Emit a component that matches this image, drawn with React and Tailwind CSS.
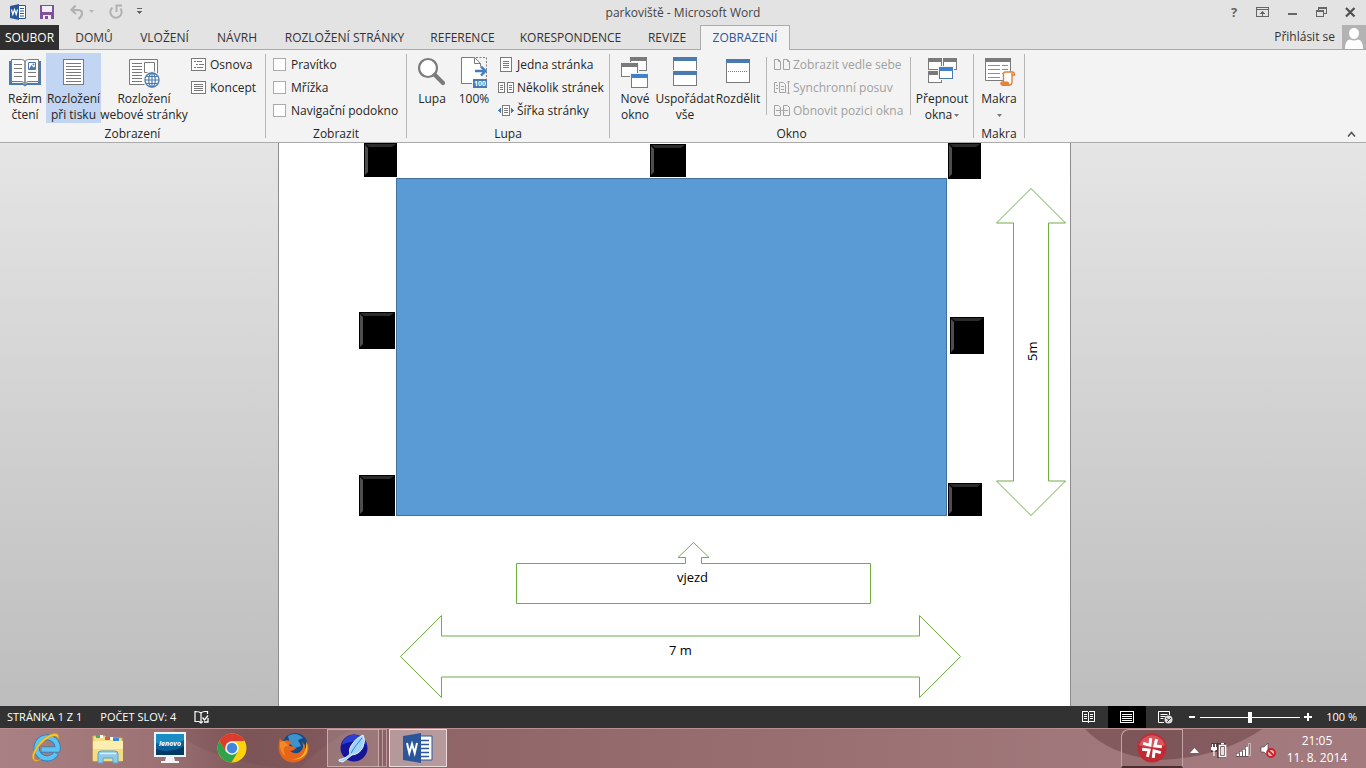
import React from "react";

const BLUE = "#4a7ab0";
const GREY = "#7a7a7a";

function Icon({ w = 32, h = 32, label, children, crisp = true }) {
  return (
    <svg
      width={w}
      height={h}
      viewBox={`0 0 ${w} ${h}`}
      fill="none"
      shapeRendering={crisp ? "crispEdges" : "auto"}
      className="shrink-0"
      aria-hidden={label ? undefined : true}
      aria-label={label}
    >
      {children}
    </svg>
  );
}

function Lines({ x1, x2, ys, color = GREY }) {
  return ys.map((y) => <path key={y} d={`M${x1} ${y}.5H${x2}`} stroke={color} />);
}

/* ---------- large ribbon icons ---------- */

const BookIcon = () => (
  <Icon crisp={false}>
    <path d="M0 4h3v22h11l2 1.500 2-1.500h11V4h3v24H18l-2 1.500L14 28H0z" fill={BLUE} />
    <path d="M2.500 2.500h10q3.500 0 3.500 3v21q-1-2-4-2H2.500zM29.500 2.500h-10Q16 2.500 16 5.500v21q1-2 4-2h9.500z" fill="#fff" stroke={GREY} />
    <path d="M5 7.500h8M5 11.500h8M5 15.500h8M5 19.500h8M19 15.500h8M19 19.500h8" stroke={GREY} />
    <path d="M19.500 5.500h7v7h-7z" fill="#fff" stroke={BLUE} />
    <path d="M20 12l2.500-4 2 2.500 1-1L27 12z" fill={BLUE} />
    <circle cx="24.500" cy="7.500" r="1" fill={BLUE} />
  </Icon>
);

const PrintLayoutIcon = () => (
  <Icon>
    <path d="M5.500 2.500h20v25h-20z" fill="#fff" stroke={GREY} />
    <Lines x1={8} x2={23} ys={[6, 9, 12, 15, 18, 21, 24]} />
  </Icon>
);

const WebLayoutIcon = () => (
  <Icon crisp={false}>
    <path d="M1.500 2.500h28v25h-28z" fill="#fff" stroke={GREY} />
    <path d="M4 6.500h10M4 9.500h10M4 12.500h10M4 15.500h10M4 18.500h10M4 21.500h10M4 24.500h10" stroke={GREY} />
    <path d="M16.500 5.500h10v10h-10z" fill="#fff" stroke={GREY} />
    <circle cx="24" cy="23" r="9" fill="#f3f3f3" />
    <circle cx="24" cy="23" r="7" fill="#fff" stroke={BLUE} strokeWidth="1.300" />
    <ellipse cx="24" cy="23" rx="3.300" ry="7" stroke={BLUE} strokeWidth="1.200" />
    <path d="M24 16v14M17 23h14M18.500 19.500h11M18.500 26.500h11" stroke={BLUE} strokeWidth="1.200" />
  </Icon>
);

const MagnifierIcon = () => (
  <Icon crisp={false}>
    <circle cx="12" cy="11" r="9" fill="#fff" stroke={GREY} strokeWidth="2.200" />
    <path d="M19 18l8 8" stroke={GREY} strokeWidth="4.200" strokeLinecap="round" />
  </Icon>
);

const Zoom100Icon = () => (
  <Icon crisp={false}>
    <path d="M3.500.5h13l6 6v20h-19z" fill="#fff" />
    <path d="M14 26.500H3.500V.5h13v6h6M16.500.5l6 6v3" stroke={GREY} />
    <path d="M18 .5h10.500V22" stroke={GREY} strokeDasharray="2 1.500" />
    <path d="M17 14h10M23 9.500l4.500 4.500-4.500 4.500" stroke="#3f7cc0" strokeWidth="2.400" />
    <path d="M15 22h14v9H15z" fill={BLUE} />
    <text x="22" y="29" textAnchor="middle" fontSize="7" fontWeight="700" fill="#fff" fontFamily="Open Sans, sans-serif">100</text>
  </Icon>
);

function Win({ x, y, w, h, bar = GREY, bh = 4, stroke = GREY }) {
  return (
    <>
      <rect x={x - 1} y={y - 1} width={w + 2} height={h + 2} fill="#f3f3f3" />
      <rect x={x + 0.5} y={y + 0.5} width={w - 1} height={h - 1} fill="#fff" stroke={stroke} />
      <rect x={x} y={y} width={w} height={bh} fill={bar} />
    </>
  );
}

const NewWindowIcon = () => (
  <Icon>
    <Win x={11} y={0} w={17} h={14} />
    <Win x={2} y={6} w={17} h={14} />
    <Win x={12} y={17} w={17} h={14} bar="#4380cc" />
  </Icon>
);
const ArrangeIcon = () => (
  <Icon>
    <Win x={4} y={0} w={24} h={15} />
    <Win x={4} y={14} w={24} h={15} />
    <path d="M4 0h24v4H4zM4 14h24v4H4z" fill={BLUE} />
  </Icon>
);
const SplitIcon = () => (
  <Icon>
    <Win x={4} y={2} w={24} h={24} bar={BLUE} />
    <path d="M6 14.500h20" stroke={GREY} strokeDasharray="1 1" />
  </Icon>
);
const SwitchIcon = () => (
  <Icon>
    <Win x={2} y={1} w={14} h={12} />
    <Win x={17} y={1} w={14} h={12} />
    <Win x={2} y={14} w={14} h={12} />
    <Win x={13} y={10} w={14} h={12} bar="#4380cc" stroke={BLUE} />
  </Icon>
);
const MacroIcon = () => (
  <Icon crisp={false}>
    <path d="M2.500 1.500h25v22h-25z" fill="#fff" stroke={GREY} />
    <path d="M2 1h26v4H2z" fill={GREY} />
    <path d="M5 8.500h12m2 0h6M5 12.500h12m2 0h6M5 16.500h12m2 0h4M5 20.500h12" stroke="#8f8f8f" />
    <path d="M20 15h10v13H17v-4h3z" fill="#fff" />
    <path d="M20.500 25V17q0-2 2-2h7q2 0 2 3h-3M29 16v9q0 3-2.500 3" stroke="#e07f36" strokeWidth="1.400" />
    <path d="M18 25h7l1.500 3.500H19q-2-1-1-3.500z" fill="#e8833a" stroke="#e07f36" />
  </Icon>
);

/* ---------- small ribbon icons ---------- */

const OutlineIcon = () => (
  <Icon w={16} h={16}>
    <path d="M.5 1.500h14v12H.5z" fill="#fff" stroke={GREY} />
    <path d="M3 4.500h2m1 0h5M5 7.500h2m1 0h5M3 10.500h2m1 0h6" stroke={GREY} />
  </Icon>
);
const DraftIcon = () => (
  <Icon w={16} h={16}>
    <path d="M.5 1.500h14v12H.5z" fill="#fff" stroke={GREY} />
    <Lines x1={3} x2={12} ys={[4, 6, 8, 10]} />
  </Icon>
);
const OnePageIcon = () => (
  <Icon w={16} h={16}>
    <path d="M2.500.5h11v14h-11z" fill="#fff" stroke={GREY} />
    <Lines x1={5} x2={11} ys={[4, 6, 8, 10]} />
  </Icon>
);
const MultiPageIcon = () => (
  <Icon w={16} h={16}>
    <path d="M.5 2.500h6v10h-6zM9.500 2.500h6v10h-6z" fill="#fff" stroke={GREY} />
    <Lines x1={2} x2={5} ys={[5, 7, 9]} />
    <Lines x1={11} x2={14} ys={[5, 7, 9]} />
  </Icon>
);
const PageWidthIcon = () => (
  <Icon w={16} h={16}>
    <path d="M4.500 2.500h7v10h-7z" fill="#fff" stroke={GREY} />
    <Lines x1={6} x2={10} ys={[5, 7, 9]} />
    <path d="M3 5v5L0 7.500zM13 5v5l3-2.500z" fill={BLUE} />
  </Icon>
);
const SideBySideIcon = () => (
  <Icon w={16} h={16} crisp={false}>
    <path d="M.5 2.500h4l2 2v8h-6zM9.500 2.500h4l2 2v8h-6zM4.500 2.500v2h2M13.500 2.500v2h2" stroke="#a3a3a3" />
  </Icon>
);
const SyncIcon = () => (
  <Icon w={16} h={16} crisp={false}>
    <path d="M3 2.500H.5v10H3M5.500 2.500h4l2 2v8h-6zM2 5.500h2M2 8.500h2M7 6.500h3M7 9.500h3M14.500 1v13M13 2.500l1.500-1.500L16 2.500M13 12.500l1.500 1.500 1.500-1.500" stroke="#a3a3a3" />
  </Icon>
);
const ResetIcon = () => (
  <Icon w={16} h={16} crisp={false}>
    <path d="M.5 2.500h4l2 2v8h-6zM9.500 2.500h4l2 2v8h-6zM2 7.500h5M9 7.500h5M5.500 5.500l2 2-2 2M10.500 5.500l-2 2 2 2" stroke="#a3a3a3" />
  </Icon>
);

/* ---------- ribbon building blocks ---------- */

function BigButton({ icon, lines, width, active, caret }) {
  return (
    <button
      type="button"
      className={`flex h-[70px] shrink-0 flex-col items-center pt-1 text-center leading-4 whitespace-nowrap ${width} ${active ? "bg-[#c2d5f2]" : ""}`}
    >
      {icon}
      <span className="mt-0.5 flex flex-col items-center">
        {lines.map((l, i) => (
          <span key={i} className="flex h-4 items-center gap-0.5">
            {l}
            {caret && i === lines.length - 1 && <Caret />}
          </span>
        ))}
      </span>
    </button>
  );
}

const Caret = () => (
  <svg width="5" height="3" viewBox="0 0 5 3" aria-hidden="true">
    <path d="M0 0h5L2.500 3z" fill="#777" />
  </svg>
);

function SmallButton({ icon, children, disabled, gap = "gap-[3px]" }) {
  return (
    <button
      type="button"
      disabled={disabled}
      className={`flex h-[23px] items-center whitespace-nowrap ${gap} ${disabled ? "text-[#a0a0a0]" : ""}`}
    >
      {icon}
      {children}
    </button>
  );
}

function Group({ title, width, children }) {
  return (
    <>
      <section className={`flex shrink-0 flex-col pt-[3px] ${width}`} aria-label={title}>
        <div className="flex h-[70px]">{children}</div>
        <div className="mt-[3px] text-center leading-4">{title}</div>
      </section>
      <div className="my-1 w-px shrink-0 bg-[#b5b5b5]" />
    </>
  );
}

const Divider = () => <div className="mt-1 h-[58px] w-px shrink-0 bg-[#b5b5b5]" />;

function Check({ children }) {
  return (
    <label className="flex h-[23px] items-center gap-[5px] whitespace-nowrap">
      <input type="checkbox" className="size-[13px] appearance-none border border-[#ababab] bg-white" />
      {children}
    </label>
  );
}

const TABS = [
  ["DOMŮ", "w-[64px]"],
  ["VLOŽENÍ", "w-[77px]"],
  ["NÁVRH", "w-[68px]"],
  ["ROZLOŽENÍ STRÁNKY", "w-[147px]"],
  ["REFERENCE", "w-[89px]"],
  ["KORESPONDENCE", "w-[127px]"],
  ["REVIZE", "w-[66px]"],
];

function TitleBar() {
  return (
    <header className="grid h-[25px] grid-cols-[1fr_auto_1fr] items-center text-[#444]">
      <div className="flex items-center pb-0.5 pl-[9px]">
        <Icon w={18} h={18} crisp={false}>
          <path d="M9.500 2.500h7v13h-7z" fill="#fff" stroke="#2b579a" />
          <path d="M11 5.500h4M11 8h4M11 10.500h4M11 13h4" stroke="#2b579a" />
          <path d="M1 3l9-2v16l-9-2z" fill="#2b579a" />
          <path d="M2.500 6.500l1.300 5 1.700-5 1.700 5 1.300-5" stroke="#fff" strokeWidth="1.200" />
        </Icon>
        <button type="button" aria-label="Uložit" className="ml-3">
          <Icon w={16} h={16}>
            <path d="M1 1h14v14H1z" fill="#80509e" />
            <path d="M3 2h10v6H3zM4 11h8v4H4z" fill="#f3edf7" />
            <path d="M6 12h3v3H6z" fill="#80509e" />
          </Icon>
        </button>
        <button type="button" aria-label="Zpět" className="ml-3.5 flex items-center gap-1">
          <Icon w={16} h={16} crisp={false}>
            <path d="M6.500 1.500L2.500 6l4.500 4M2.500 6h6.500q4.500 0 4 4-.5 3-3.500 5" stroke="#b1b1b1" strokeWidth="2.200" />
          </Icon>
          <svg width="5" height="3" viewBox="0 0 5 3" aria-hidden="true"><path d="M0 0h5L2.500 3z" fill="#b8b8b8" /></svg>
        </button>
        <button type="button" aria-label="Opakovat" className="ml-3.5">
          <Icon w={16} h={16} crisp={false}>
            <path d="M4.500 3.500A5.700 5.700 0 1 0 12.500 4.500" stroke="#b1b1b1" strokeWidth="2" />
            <path d="M14 1.500H8.500V8" stroke="#b1b1b1" strokeWidth="2" />
          </Icon>
        </button>
        <button type="button" aria-label="Přizpůsobit panel" className="ml-3">
          <Icon w={7} h={7}>
            <path d="M1 .5h5" stroke="#666" />
            <path d="M1 3h5L3.500 6z" fill="#666" />
          </Icon>
        </button>
      </div>
      <h1>parkoviště - Microsoft Word</h1>
      <div className="flex items-center justify-end gap-[13px] pr-2 pb-0.5">
        <button type="button" aria-label="Nápověda" className="w-4 text-[13px] leading-4 font-bold text-[#666]">?</button>
        <button type="button" aria-label="Možnosti pásu karet">
          <Icon w={16} h={16}>
            <path d="M1.500 3.500h12v9h-12zM2 5.500h11" stroke="#666" />
            <path d="M7 7h1v5H7zM6 8h3v1H6zM5 9h5v1H5z" fill="#666" />
          </Icon>
        </button>
        <button type="button" aria-label="Minimalizovat">
          <Icon w={16} h={16}><path d="M4 9h9v2H4z" fill="#666" /></Icon>
        </button>
        <button type="button" aria-label="Obnovit">
          <Icon w={16} h={16}>
            <path d="M5.500 6V3.500h8v6H11M5 4.500h9" stroke="#666" />
            <path d="M3.500 6.500h7v6h-7zM3 7.500h8" stroke="#666" />
          </Icon>
        </button>
        <button type="button" aria-label="Zavřít">
          <Icon w={16} h={16} crisp={false}>
            <path d="M4 4l8.500 8.500M12.500 4L4 12.500" stroke="#505050" strokeWidth="2.200" />
          </Icon>
        </button>
      </div>
    </header>
  );
}

function TabRow() {
  return (
    <nav className="flex h-[25px] items-stretch text-[#333]">
      <button type="button" className="w-[59px] bg-[#2f2f2f] text-white">SOUBOR</button>
      <div className="flex flex-1 border-b border-[#a9a9a9] pl-[3px]">
        {TABS.map(([name, w]) => (
          <button key={name} type="button" className={`shrink-0 pt-0.5 whitespace-nowrap ${w}`}>{name}</button>
        ))}
        <button type="button" className="-mb-px w-[90px] shrink-0 border border-b-0 border-[#ababab] bg-[#f3f3f3] text-[#2b579a]">
          ZOBRAZENÍ
        </button>
        <button type="button" className="ml-auto flex items-center gap-[7px]">
          Přihlásit se
          <svg width="24" height="24" viewBox="0 0 24 24" aria-hidden="true">
            <path d="M0 0h24v24H0z" fill="#b3b3b3" />
            <path d="M7 8a5 5 0 0 1 10 0q0 3-2 5-3 2-6 0-2-2-2-5zM3 24q0-9 5-9.500 4 2 8 0 5 .5 5 9.500z" fill="#fff" />
          </svg>
        </button>
      </div>
    </nav>
  );
}

function Ribbon() {
  return (
    <div className="flex h-[93px] border-b border-[#ababab] bg-[#f3f3f3] text-[#262626]">
      <Group title="Zobrazení" width="w-[265px]">
        <div className="flex pl-1">
          <BigButton icon={<BookIcon />} lines={["Režim", "čtení"]} width="w-[42px]" />
          <BigButton icon={<PrintLayoutIcon />} lines={["Rozložení", "při tisku"]} width="w-[55px]" active />
          <BigButton icon={<WebLayoutIcon />} lines={["Rozložení", "webové stránky"]} width="w-[86px]" />
        </div>
        <div className="ml-1">
          <SmallButton icon={<OutlineIcon />}>Osnova</SmallButton>
          <SmallButton icon={<DraftIcon />}>Koncept</SmallButton>
        </div>
      </Group>
      <Group title="Zobrazit" width="w-[140px]">
        <div className="pl-[7px]">
          <Check>Pravítko</Check>
          <Check>Mřížka</Check>
          <Check>Navigační podokno</Check>
        </div>
      </Group>
      <Group title="Lupa" width="w-[202px]">
        <div className="flex pl-1">
          <BigButton icon={<MagnifierIcon />} lines={["Lupa"]} width="w-[42px]" />
          <BigButton icon={<Zoom100Icon />} lines={["100%"]} width="w-[42px]" />
        </div>
        <div className="ml-[3px]">
          <SmallButton icon={<OnePageIcon />}>Jedna stránka</SmallButton>
          <SmallButton icon={<MultiPageIcon />}>Několik stránek</SmallButton>
          <SmallButton icon={<PageWidthIcon />}>Šířka stránky</SmallButton>
        </div>
      </Group>
      <Group title="Okno" width="w-[363px]">
        <div className="flex pl-[5px]">
          <BigButton icon={<NewWindowIcon />} lines={["Nové", "okno"]} width="w-[40px]" />
          <BigButton icon={<ArrangeIcon />} lines={["Uspořádat", "vše"]} width="w-[60px]" />
          <BigButton icon={<SplitIcon />} lines={["Rozdělit"]} width="w-[46px]" />
        </div>
        <div className="ml-[5px] flex">
          <Divider />
          <div className="ml-[7px] w-[136px]">
            <SmallButton icon={<SideBySideIcon />} disabled>Zobrazit vedle sebe</SmallButton>
            <SmallButton icon={<SyncIcon />} disabled>Synchronní posuv</SmallButton>
            <SmallButton icon={<ResetIcon />} disabled>Obnovit pozici okna</SmallButton>
          </div>
          <Divider />
          <BigButton icon={<SwitchIcon />} lines={["Přepnout", "okna"]} width="w-[62px]" caret />
        </div>
      </Group>
      <Group title="Makra" width="w-[50px]">
        <BigButton icon={<MacroIcon />} lines={["Makra", ""]} width="w-[50px]" caret />
      </Group>
      <button type="button" aria-label="Sbalit pás karet" className="mr-2.5 mb-1 ml-auto self-end">
        <Icon w={9} h={7} crisp={false}>
          <path d="M1 5.500l3.500-4 3.500 4" stroke="#555" strokeWidth="1.600" />
        </Icon>
      </button>
    </div>
  );
}

/* Posts around the parking area: x, y, width, height in canvas units. */
const POSTS = [
  [364, 143, 33, 34],
  [650, 144, 36, 33],
  [948, 143, 33, 36],
  [359, 312, 36, 37],
  [950, 317, 34, 37],
  [359, 475, 36, 41],
  [948, 483, 34, 33],
];

function Drawing() {
  return (
    <div className="relative h-[563px] w-[791px]">
      <svg width="791" height="563" viewBox="279 143 791 563" fill="none" aria-hidden="true">
        <rect x="396.500" y="178.500" width="550" height="337" fill="#5b9bd5" stroke="#41719c" />
        {POSTS.map(([x, y, w, h]) => (
          <g key={`${x}-${y}`}>
            <rect x={x} y={y} width={w} height={h} fill="#000" />
            <path d={`M${x + 1} ${y + 1}h${w - 2}l-4 3h${10 - w}z`} fill="#2b2b2b" />
            <path d={`M${x + 1} ${y + 2}l3 3v${h - 10}l-3 3z`} fill="#4d4d4d" />
          </g>
        ))}
        <g stroke="#70ad47" fill="#fff">
          <path d="M1031 188.500l34.500 34.500H1048.500V481H1065.500L1031 515.500 996.500 481H1013.500V223H996.500z" />
          <path d="M516.500 563.500H685.500V557.500H678L693.500 542.500 709 557.500H701.500V563.500H870.500V603.500H516.500z" />
          <path d="M400.500 656.500L441.500 615.500V636H919.500V615.500L960.500 656.500 919.500 697.500V677H441.500V697.500z" />
        </g>
      </svg>
      <p className="absolute top-[425px] left-[237px] w-[353px] text-center text-[13px] leading-[18px] text-black">vjezd</p>
      <p className="absolute top-[498px] left-[163px] w-[477px] text-center text-[13px] leading-[18px] text-black">7 m</p>
      <p className="absolute top-[81px] left-[744px] h-[254px] w-[18px] rotate-180 text-center text-[13px] leading-[18px] text-black [writing-mode:vertical-rl]">5m</p>
    </div>
  );
}

function StatusBar() {
  return (
    <div className="flex h-[22px] shrink-0 items-center bg-[#323232] text-[11px] text-white">
      <span className="pl-[7px]">STRÁNKA 1 Z 1</span>
      <span className="ml-[18px]">POČET SLOV: 4</span>
      <button type="button" aria-label="Kontrola pravopisu" className="ml-[18px]">
        <Icon w={16} h={14} crisp={false}>
          <path d="M7 12V3Q5.500 1.500 1 1.500v10h4L7 13l2-1.500M7 3q1.500-1.500 4-1.500h2.500V4" stroke="#fff" strokeWidth="1.200" />
          <path d="M8.500 7.500l2 2.500L14 5.500M10 12h4V8" stroke="#fff" strokeWidth="1.300" />
        </Icon>
      </button>
      <div className="ml-auto flex h-full items-center pr-[9px]">
        <button type="button" aria-label="Režim čtení" className="flex h-full w-[39px] items-center justify-center">
          <Icon w={14} h={14}>
            <path d="M.5 1.500h5l1 1 1-1h5v10h-5l-1 1-1-1h-5zM6.500 2v11M2 4.500h3M2 6.500h3M2 8.500h3M8 4.500h3M8 6.500h3M8 8.500h3" stroke="#fff" />
          </Icon>
        </button>
        <button type="button" aria-label="Rozložení při tisku" className="flex h-full w-[38px] items-center justify-center bg-black">
          <Icon w={14} h={12}>
            <path d="M.5.5h13v11H.5zM2 3.500h10M2 5.500h10M2 7.500h10M2 9.500h10" stroke="#fff" />
          </Icon>
        </button>
        <button type="button" aria-label="Rozložení webové stránky" className="flex h-full w-[38px] items-center justify-center">
          <Icon w={15} h={13} crisp={false}>
            <path d="M6 11.500H.5V.5h11V4M2.500 3.500h7M2.500 5.500h5M2.500 7.500h3" stroke="#fff" />
            <circle cx="10.500" cy="8.500" r="4" fill="#ddd" />
            <path d="M8 7l3 2 2-2M9 11l2-2" stroke="#444" />
          </Icon>
        </button>
        <div className="ml-1 flex items-center gap-1 text-white">
          <button type="button" aria-label="Oddálit"><Icon w={8} h={8}><path d="M1 3h6v2H1z" fill="#fff" /></Icon></button>
          <input
            type="range"
            min="0"
            max="100"
            defaultValue="50"
            aria-label="Lupa"
            className="h-3 w-[100px] appearance-none bg-[linear-gradient(#fff,#fff)] bg-[length:100%_1px] bg-center bg-no-repeat [&::-webkit-slider-thumb]:h-[11px] [&::-webkit-slider-thumb]:w-1 [&::-webkit-slider-thumb]:appearance-none [&::-webkit-slider-thumb]:bg-white"
          />
          <button type="button" aria-label="Přiblížit"><Icon w={8} h={8}><path d="M0 3h8v2H0zM3 0h2v8H3z" fill="#fff" /></Icon></button>
        </div>
        <span className="ml-[14px] whitespace-nowrap">100 %</span>
      </div>
    </div>
  );
}

/* ---------- taskbar ---------- */

const IEIcon = () => (
  <svg width="32" height="32" viewBox="0 0 32 32" fill="none" aria-hidden="true">
    <path d="M26 21.500A10.500 10.500 0 1 1 27.500 17.500H11.500" stroke="#1f7fc4" strokeWidth="6" />
    <path d="M26 21.500A10.500 10.500 0 1 1 27.500 17.500H11.500" stroke="#5cc3f2" strokeWidth="4.400" />
    <path d="M3.500 28Q0 24 7 14 16 2 25 1.500q5 0 3 6 0-4-4-3.500Q15 6 8 16q-6 9-3 12 2 1 6-1-5 4-7.500 1z" fill="#fbc92b" stroke="#d99b14" strokeWidth=".5" />
  </svg>
);

const FolderIcon = () => (
  <svg width="32" height="32" viewBox="0 0 32 32" fill="none" aria-hidden="true">
    <path d="M1 4h12l2 2h15v23H1z" fill="#f2dd8b" stroke="#d3b654" />
    <path d="M4 3h4v3H4z" fill="#4fa95a" /><path d="M13 5h5v3h-5z" fill="#d95b3a" /><path d="M21 6h6v3h-6z" fill="#3b8bd0" />
    <path d="M8 3h3v3H8zM18 5h3v3h-3z" fill="#fff" />
    <path d="M1 9h30v20H1z" fill="#fbeeaf" /><path d="M1 17h30v12H1z" fill="#f4dc82" />
    <path d="M6 31V22q0-3 3-3h14q3 0 3 3v9h-5v-4q0-1-1-1h-8q-1 0-1 1v4z" fill="#8fcbe8" stroke="#5aa3c8" />
    <path d="M8 21.500h16" stroke="#d5effa" strokeWidth="1.500" />
  </svg>
);

const LenovoIcon = () => (
  <svg width="34" height="34" viewBox="0 0 34 34" aria-hidden="true">
    <path d="M1 1h32v25H1z" fill="#eef4f7" />
    <path d="M3 3h28v21H3z" fill="#07609b" />
    <path d="M3 3h28v6Q17 17 3 12z" fill="#198dc4" />
    <path d="M3 18q14 5 28-3v9H3z" fill="#023a63" />
    <path d="M13 26h8l1 4h4v2H8v-2h4z" fill="#f5f5f5" />
    <text x="17" y="15" textAnchor="middle" fontSize="7" fontWeight="700" fontStyle="italic" fill="#fff" fontFamily="Open Sans, sans-serif">lenovo</text>
  </svg>
);

const ChromeIcon = () => (
  <svg width="30" height="30" viewBox="0 0 30 30" aria-hidden="true">
    <circle cx="15" cy="15" r="14.500" fill="#fcd20b" />
    <path d="M2.400 7.800A14.500 14.500 0 0 0 14.500 29.500L21 18.500 15 21 9 18.500z" fill="#31a24c" />
    <path d="M2.400 7.800A14.500 14.500 0 0 1 27.600 8H15L9 12 8.500 18z" fill="#dd3b2e" />
    <circle cx="15" cy="15" r="6.800" fill="#f4f4f4" />
    <circle cx="15" cy="15" r="5.200" fill="#3f86dc" />
  </svg>
);

const FirefoxIcon = () => (
  <svg width="32" height="32" viewBox="0 0 32 32" aria-hidden="true">
    <circle cx="17" cy="14" r="13" fill="#174a85" />
    <path d="M10 4q8-5 15 2l-5 2 3 6-6 2-5-4z" fill="#3c93ce" />
    <path d="M2 6q1 3 4 3 4-2 7 1l-2 4q5 0 7 2-2 3-6 3 5 4 10 1 5-4 2-10 4 3 3 7 3-3 2-8 4 10-2 16-6 7-15 5Q3 28 1 19 0 11 2 6z" fill="#e8641b" />
    <path d="M28 9q4 9-2 15-6 5-13 3 9 1 13-6 3-5 2-12z" fill="#f9bd2e" />
    <path d="M2 10q-1 10 6 15-3-5-2-9 2-3 5-2l-5-5z" fill="#f08a24" />
  </svg>
);

const SeaMonkeyIcon = () => (
  <svg width="30" height="30" viewBox="0 0 30 30" aria-hidden="true">
    <circle cx="16" cy="15" r="13.500" fill="#15159a" />
    <path d="M3 12Q16 5 29 12 25 1.500 16 1.500T3 12z" fill="#2b3fd0" />
    <path d="M25 2q-7 3-10 8-5 6-3 11-4 4-8 5-4 0-3 2l4 1 9-7q8-1 11-8 3-7 0-12z" fill="#9fd3f7" stroke="#e5f5ff" />
    <path d="M24 5q-7 8-11 15" stroke="#397dd8" fill="none" />
  </svg>
);

const WordIcon = () => (
  <svg width="32" height="32" viewBox="0 0 32 32" fill="none" aria-hidden="true">
    <path d="M17 4h13v24H17z" fill="#fff" stroke="#2b579a" />
    <path d="M18 8.500h9M18 12.500h9M18 16.500h9M18 20.500h9M18 24.500h9" stroke="#2b579a" strokeWidth="1.500" />
    <path d="M1 4l18-3v30L1 28z" fill="#2b579a" />
    <path d="M5 11l2.300 10L10 12l2.700 9L15 11" stroke="#fff" strokeWidth="2" />
  </svg>
);

function Launcher({ label, children }) {
  return (
    <button type="button" aria-label={label} className="flex h-full w-[62px] items-center justify-center">
      {children}
    </button>
  );
}

function Taskbar() {
  return (
    <footer className="relative flex h-10 shrink-0 items-stretch overflow-hidden bg-[linear-gradient(90deg,#a98083,#9c7174_12%,#80595b_18%,#906567_32%,#9a6f71_60%,#a0777a_78%,#a37a7d)] text-white">
      <svg className="absolute inset-0 h-full w-full" preserveAspectRatio="none" viewBox="0 0 1366 40" aria-hidden="true">
        <path d="M172 0H355Q320 18 300 40H280Q200 30 172 0z" fill="#6f484b" opacity=".25" />
        <path d="M1084 0H1264Q1220 30 1160 32 1110 28 1084 0z" fill="#6f484b" opacity=".6" />
        <path d="M0 .5H1366" stroke="#b98f92" />
      </svg>
      <div className="relative flex flex-1 pl-[15px]">
        <Launcher label="Internet Explorer"><IEIcon /></Launcher>
        <Launcher label="Průzkumník souborů"><FolderIcon /></Launcher>
        <Launcher label="Lenovo"><LenovoIcon /></Launcher>
        <Launcher label="Google Chrome"><ChromeIcon /></Launcher>
        <Launcher label="Firefox"><FirefoxIcon /></Launcher>
        <div className="my-px ml-0.5 flex">
          <button type="button" aria-label="SeaMonkey" className="flex w-[52px] items-center justify-center border border-[#c9abad] bg-white/15">
            <SeaMonkeyIcon />
          </button>
          <span className="w-1 border-y border-r border-[#bb9a9c]" />
          <span className="w-1 border-y border-r border-[#bb9a9c]" />
        </div>
        <button type="button" aria-label="Microsoft Word" className="my-px ml-0.5 flex w-[58px] items-center justify-center border border-[#ead9da] bg-white/35">
          <WordIcon />
        </button>
      </div>
      <div className="relative flex items-stretch">
        <button type="button" aria-label="Aplikace" className="mt-px flex w-[62px] items-center justify-center rounded-tl-lg border border-b-2 border-[#c4a3a5] border-b-[#4c2c2f] bg-black/5">
          <svg width="30" height="30" viewBox="0 0 30 30" aria-hidden="true">
            <circle cx="15" cy="15" r="14.500" fill="#c22a33" />
            <path d="M2 12a13.500 13.500 0 0 1 26 0Q15 17 2 12z" fill="#e57379" opacity=".6" />
            <g stroke="#fff" strokeWidth="3" fill="none" transform="rotate(10 15 15)">
              <path d="M12 5.500l.5 7-7-.5M18 5.500l-.5 7 7-.5M24.500 18l-7-.5.5 7M5.500 18l7-.5-.5 7" />
            </g>
          </svg>
        </button>
        <div className="flex items-center pt-1 pl-[7px]">
          <button type="button" aria-label="Zobrazit skryté ikony">
            <Icon w={9} h={5} crisp={false}><path d="M0 5h9L4.500 0z" fill="#fff" /></Icon>
          </button>
          <span className="ml-3">
            <Icon w={17} h={16} label="Baterie" crisp={false}>
              <path d="M6 1h9v15H6zM0 1h6v9H0z" fill="#3a2a2c" opacity=".7" />
              <path d="M10 1h3v1.500h-3z" fill="#fff" />
              <path d="M8.500 3.500h6v11h-6z" stroke="#fff" strokeWidth="1.600" />
              <path d="M10 5h3v8h-3z" fill="#fff" opacity=".85" />
              <path d="M1.500 2v3M4.500 2v3M3 8v6" stroke="#fff" strokeWidth="1.200" />
              <path d="M0 5h6v3H4.500v1h-3V8H0z" fill="#fff" />
            </Icon>
          </span>
          <span className="ml-2">
            <Icon w={16} h={14} label="Síť">
              <path d="M0 10h3v3H0zM3 8h3v5H3zM6 6h3v7H6zM9 3h3v10H9z" fill="#fff" stroke="#3a2a2c" strokeWidth=".5" />
              <path d="M12.500.5h2v12h-2z" stroke="#c7b5b6" fill="#8e7173" />
            </Icon>
          </span>
          <span className="ml-2">
            <Icon w={16} h={16} label="Zvuk vypnutý" crisp={false}>
              <path d="M1 5h3l4-4v13L4 10H1z" fill="#fff" stroke="#3a2a2c" strokeWidth=".6" />
              <circle cx="11" cy="11" r="4" fill="#e9b6b6" stroke="#cc1f27" strokeWidth="1.800" />
              <path d="M8.500 8.500l5 5" stroke="#cc1f27" strokeWidth="1.800" />
            </Icon>
          </span>
        </div>
        <time dateTime="2014-08-11T21:05" className="mr-5 ml-3 flex w-[58px] flex-col items-center pt-1 text-center leading-[17px] whitespace-nowrap">
          <span>21:05</span>
          <span>11. 8. 2014</span>
        </time>
      </div>
    </footer>
  );
}

export default function App() {
  return (
    <div className="flex min-h-screen flex-col bg-[#e3e3e3] font-['Open_Sans','Noto_Sans',sans-serif] text-[12px]">
      <TitleBar />
      <TabRow />
      <Ribbon />
      <main className="flex flex-1 justify-center bg-linear-to-b from-[#e5e5e5] to-[#bdbdbd] pr-[17px]">
        <div className="border-x border-[#8c8c8c] bg-white">
          <Drawing />
        </div>
      </main>
      <StatusBar />
      <Taskbar />
    </div>
  );
}
